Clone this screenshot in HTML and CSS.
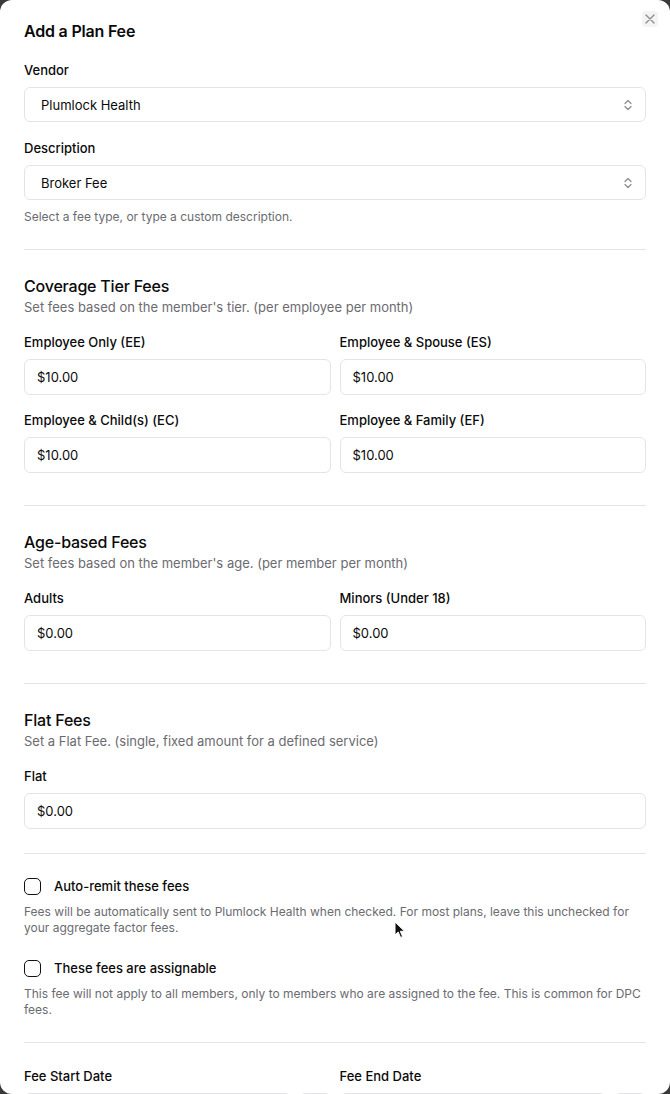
FILE: index.html
```html
<!DOCTYPE html>
<html lang="en">
<head>
<meta charset="utf-8">
<title>Add a Plan Fee</title>
<link rel="stylesheet" href="styles.css">
</head>
<body>
<div class="dialog">
  <button class="close" aria-label="Close">
    <svg width="12" height="12" viewBox="0 0 12 12"><path d="M2 2L10 10M10 2L2 10" stroke="#8a8a8a" stroke-width="1.3" stroke-linecap="round"/></svg>
  </button>
  <h1 class="title">Add a Plan Fee</h1>

  <div class="field">
    <label class="label">Vendor</label>
    <div class="select">
      <span>Plumlock Health</span>
      <svg class="chev" width="10" height="14" viewBox="0 0 10 14"><path d="M2 5.5L5 2.5L8 5.5M2 8.5L5 11.5L8 8.5" fill="none" stroke="#8a8a8a" stroke-width="1.2" stroke-linecap="round" stroke-linejoin="round"/></svg>
    </div>
  </div>

  <div class="field">
    <label class="label">Description</label>
    <div class="select">
      <span>Broker Fee</span>
      <svg class="chev" width="10" height="14" viewBox="0 0 10 14"><path d="M2 5.5L5 2.5L8 5.5M2 8.5L5 11.5L8 8.5" fill="none" stroke="#8a8a8a" stroke-width="1.2" stroke-linecap="round" stroke-linejoin="round"/></svg>
    </div>
    <p class="hint spaced">Select a fee type, or type a custom description.</p>
  </div>

  <hr class="divider">

  <section class="section">
    <h2 class="section-title">Coverage Tier Fees</h2>
    <p class="section-sub">Set fees based on the member's tier. (per employee per month)</p>
    <div class="grid">
      <div class="field"><label class="label">Employee Only (EE)</label><div class="input">$10.00</div></div>
      <div class="field"><label class="label">Employee &amp; Spouse (ES)</label><div class="input">$10.00</div></div>
      <div class="field"><label class="label">Employee &amp; Child(s) (EC)</label><div class="input">$10.00</div></div>
      <div class="field"><label class="label">Employee &amp; Family (EF)</label><div class="input">$10.00</div></div>
    </div>
  </section>

  <hr class="divider wide">

  <section class="section">
    <h2 class="section-title">Age-based Fees</h2>
    <p class="section-sub">Set fees based on the member's age. (per member per month)</p>
    <div class="grid">
      <div class="field"><label class="label">Adults</label><div class="input">$0.00</div></div>
      <div class="field"><label class="label">Minors (Under 18)</label><div class="input">$0.00</div></div>
    </div>
  </section>

  <hr class="divider wide">

  <section class="section">
    <h2 class="section-title">Flat Fees</h2>
    <p class="section-sub">Set a Flat Fee. (single, fixed amount for a defined service)</p>
    <div class="field"><label class="label">Flat</label><div class="input">$0.00</div></div>
  </section>

  <hr class="divider tight">

  <div class="check">
    <div class="check-row"><span class="box"></span><span class="check-label">Auto-remit these fees</span></div>
    <p class="hint">Fees will be automatically sent to Plumlock Health when checked. For most plans, leave this unchecked for your aggregate factor fees.</p>
  </div>
  <div class="check">
    <div class="check-row"><span class="box"></span><span class="check-label">These fees are assignable</span></div>
    <p class="hint">This fee will not apply to all members, only to members who are assigned to the fee. This is common for DPC fees.</p>
  </div>

  <hr class="divider tight">

  <div class="grid">
    <div class="field">
      <label class="label">Fee Start Date</label>
      <div class="date-row"><div class="input"></div><div class="input btn"></div></div>
    </div>
    <div class="field">
      <label class="label">Fee End Date</label>
      <div class="date-row"><div class="input"></div><div class="input btn"></div></div>
    </div>
  </div>

  <svg class="pointer" width="12" height="18" viewBox="0 0 12 18"><path d="M1 1L1 14L4.2 11L6.6 16.5L8.6 15.6L6.3 10.3L10.6 10.3Z" fill="#111" stroke="#fff" stroke-width="1"/></svg>
</div>
</body>
</html>
```

FILE: styles.css
```css
* { box-sizing: border-box; }

html, body {
  margin: 0;
  padding: 0;
  height: 100%;
  background: #3a3a3a;
}

body {
  font-family: Inter, "Noto Sans", sans-serif;
  color: #0a0a0a;
  overflow: hidden;
}

.dialog {
  position: relative;
  height: 100vh;
  overflow: hidden;
  background: #ffffff;
  border-radius: 12px;
  padding: 19px 24px 0;
  display: flex;
  flex-direction: column;
}

.close {
  position: absolute;
  top: 11px;
  right: 12px;
  width: 16px;
  height: 16px;
  padding: 0;
  border: none;
  border-radius: 4px;
  background: #f4f4f5;
  display: flex;
  align-items: center;
  justify-content: center;
}

.title {
  margin: 0 0 16px;
  font-size: 16px;
  line-height: 24px;
  font-weight: 600;
  letter-spacing: -0.2px;
}

.field {
  display: flex;
  flex-direction: column;
  gap: 7px;
}

.field + .field { margin-top: 15px; }

.label {
  padding-top: 1px;
  font-size: 13px;
  line-height: 20px;
  font-weight: 500;
}

.select, .input {
  height: 36px;
  border: 1px solid #e4e4e7;
  border-radius: 6px;
  display: flex;
  align-items: center;
  font-size: 13px;
}

.select {
  padding: 0 12px 0 16px;
  justify-content: space-between;
  height: 35px;
}

.input {
  padding: 0 12px;
}

.hint {
  margin: 0;
  font-size: 12px;
  line-height: 16px;
  color: #6b6b70;
}

.hint.spaced { margin-top: 2px; }

.divider {
  border: none;
  border-top: 1px solid #e4e4e7;
  margin: 24px 0;
  height: 0;
}

.divider.wide { margin-top: 32px; }
.divider.tight { margin-bottom: 22px; }

.section-title {
  margin: 1px 0 0;
  font-size: 16px;
  line-height: 22px;
  font-weight: 500;
  letter-spacing: -0.2px;
}

.section-sub {
  margin: 0 0 14px;
  font-size: 13px;
  line-height: 20px;
  color: #6b6b70;
}

.grid {
  display: grid;
  grid-template-columns: 1fr 1fr;
  column-gap: 9px;
  row-gap: 14px;
}

.grid .field + .field { margin-top: 0; }

.check { display: flex; flex-direction: column; gap: 8px; }
.check + .check { margin-top: 22px; }

.check-row {
  display: flex;
  align-items: center;
  gap: 13px;
}

.box {
  width: 17px;
  height: 17px;
  border: 1.5px solid #111;
  border-radius: 5px;
}

.check-label {
  font-size: 13px;
  line-height: 20px;
  font-weight: 500;
}

.date-row {
  display: flex;
  gap: 8px;
}

.date-row .input { flex: 1; }
.date-row .input.btn { flex: 0 0 32px; }

.pointer {
  position: absolute;
  left: 394px;
  top: 921px;
}
```
